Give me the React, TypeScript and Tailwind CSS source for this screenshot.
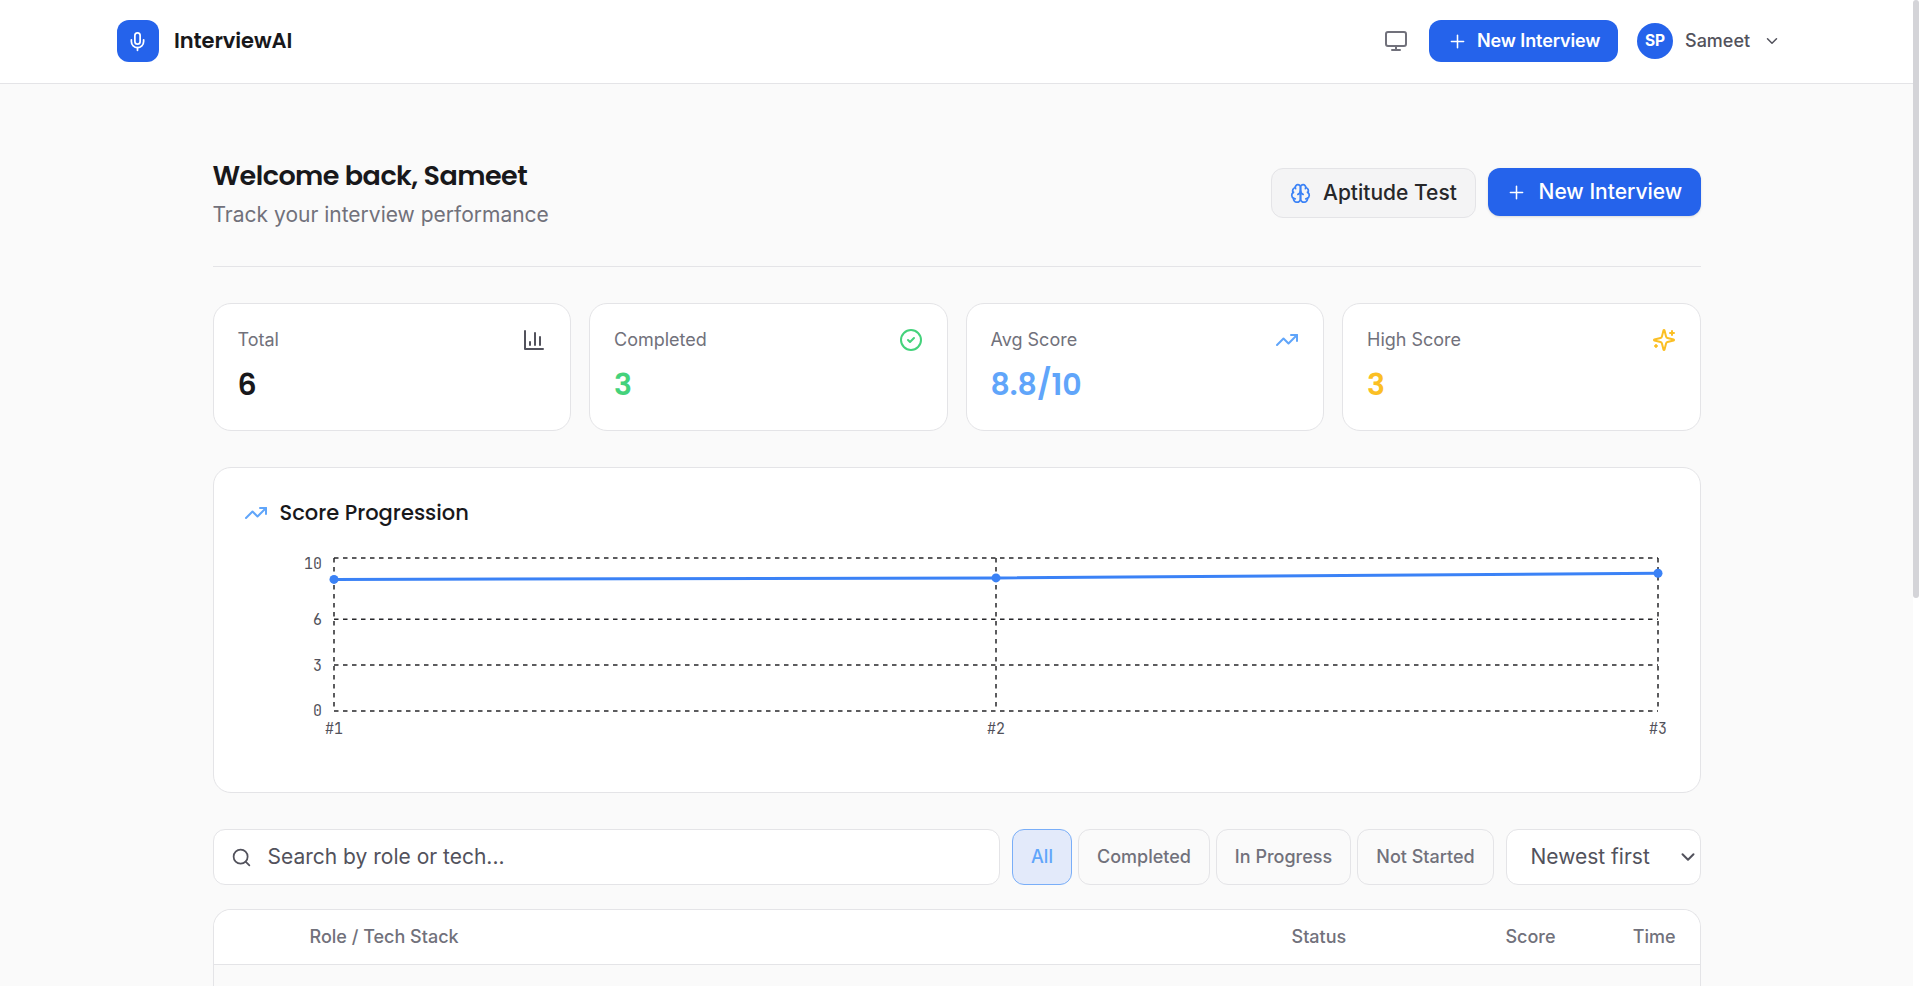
import React from 'react';
import { ChevronDown, CircleCheck, Mic, Monitor, Plus, Search, TrendingUp } from 'lucide-react';

const HEADING = "font-['Poppins','Inter',sans-serif]";

const scores = [8.6, 8.7, 9.0];

const filters = [
  { label: 'All', width: 'w-[60px]', active: true },
  { label: 'Completed', width: 'w-[132px]', active: false },
  { label: 'In Progress', width: 'w-[135px]', active: false },
  { label: 'Not Started', width: 'w-[137px]', active: false },
];

const App: React.FC = () => {
  return (
    <div className="flex h-[986px] w-[1919px] overflow-hidden bg-[#fafafa] font-['Inter',sans-serif] text-zinc-900">
      <div className="flex w-[1913px] shrink-0 flex-col">
        <Navbar />
        <main className="mx-auto flex w-[1488px] flex-col pt-[71px]">
          <WelcomeBar />

          {/* Stats */}
          <div className="mt-9 grid grid-cols-4 gap-[18px]">
            <StatCard label="Total" value="6" color="text-zinc-900" icon={<ColumnsIcon />} />
            <StatCard label="Completed" value="3" color="text-[#44d27b]" icon={<CircleCheck className="size-6 text-[#44d27b]" />} />
            <StatCard label="Avg Score" value="8.8/10" color="text-[#60a5fa]" icon={<TrendingUp className="size-6 text-[#60a5fa]" />} />
            <StatCard label="High Score" value="3" color="text-[#fbbf24]" icon={<SparklesIcon />} />
          </div>

          {/* Chart */}
          <section className="mt-9 h-[326px] rounded-[18px] border border-[#e4e4e7] bg-white px-[30px] pt-[30px]">
            <div className="flex h-[30px] items-center gap-3">
              <TrendingUp className="size-6 text-[#60a5fa]" />
              <h2 className={`${HEADING} text-[21px] font-medium`}>Score Progression</h2>
            </div>
            <ScoreChart />
          </section>

          <Toolbar />

          {/* Sessions table */}
          <section className="mt-6 h-[120px] rounded-t-[18px] border border-b-0 border-[#e4e4e7]">
            <div className="flex h-[55px] items-center rounded-t-[17px] border-b border-[#e4e4e7] bg-white pb-px pl-[96px] text-[18px] font-medium text-zinc-500">
              <span className="w-[982px]">Role / Tech Stack</span>
              <span className="w-[160px]">Status</span>
              <span className="w-[104px] text-right">Score</span>
              <span className="w-[120px] text-right">Time</span>
            </div>
          </section>
        </main>
      </div>

      {/* Scrollbar */}
      <div className="w-1.5 shrink-0 bg-white">
        <div className="h-[598px] rounded-[3px] bg-[#d4d4d8]" />
      </div>
    </div>
  );
};

const Navbar: React.FC = () => (
  <header className="flex h-[84px] shrink-0 items-center justify-between border-b border-[#e4e4e7] bg-white pr-[133px] pb-px pl-[117px]">
    <div className="flex items-center">
      <div className="flex size-[42px] items-center justify-center rounded-xl bg-[#2563eb] pr-px">
        <Mic className="size-[21px] text-white" />
      </div>
      <span className={`${HEADING} ml-[15px] text-[21px] font-semibold tracking-[-0.1px]`}>InterviewAI</span>
    </div>
    <div className="flex items-center">
      <Monitor className="size-6 text-zinc-500" />
      <button className="ml-[21px] flex h-[42px] w-[189px] items-center rounded-xl bg-[#2563eb] pl-[18px] text-[18px] font-semibold text-white">
        <Plus className="size-[21px]" strokeWidth={1.75} />
        <span className="ml-[9px] pb-[2px] tracking-[-0.1px]">New Interview</span>
      </button>
      <div className="ml-[19px] flex size-9 items-center justify-center rounded-full bg-[#2563eb] pb-px text-[15.5px] font-bold text-white">SP</div>
      <span className="ml-3 w-[67px] pb-[2px] text-[18px] font-medium text-zinc-600">Sameet</span>
      <ChevronDown className="ml-[11px] -mr-px size-[18px] text-zinc-600" />
    </div>
  </header>
);

const WelcomeBar: React.FC = () => (
  <div className="flex h-[112px] justify-between border-b border-[#e4e4e7]">
    <div>
      <h1 className={`${HEADING} mt-[3px] text-[27px] leading-[36px] font-semibold tracking-[-0.54px]`}>Welcome back, Sameet</h1>
      <p className="mt-[6px] text-[21px] leading-[30px] text-zinc-500">Track your interview performance</p>
    </div>
    <div className="mt-[13px] flex items-start gap-3">
      <button className="flex h-[50px] w-[205px] items-center rounded-xl border border-[#e4e4e7] bg-[#f4f4f5] pl-[18px] text-[21px] font-medium text-zinc-800">
        <BrainIcon />
        <span className="ml-[12.5px]">Aptitude Test</span>
      </button>
      <button className="flex h-12 w-[213px] items-center rounded-xl bg-[#2563eb] pl-[18px] text-[21px] font-medium text-white shadow-sm">
        <Plus className="size-[21px]" strokeWidth={1.75} />
        <span className="ml-3">New Interview</span>
      </button>
    </div>
  </div>
);

const StatCard: React.FC<{ label: string; value: string; color: string; icon: React.ReactNode }> = ({ label, value, color, icon }) => (
  <div className="h-[128px] rounded-[18px] border border-[#e4e4e7] bg-white px-6 pt-6">
    <div className="flex h-6 items-center justify-between">
      <span className="-mt-px text-[18px] text-zinc-500">{label}</span>
      {icon}
    </div>
    <div className={`${HEADING} ${color} mt-[15px] text-[30px] leading-[36px] font-semibold`}>{value}</div>
  </div>
);

const ColumnsIcon: React.FC = () => (
  <svg className="size-6 text-zinc-600" viewBox="0 0 24 24" fill="none" stroke="currentColor" strokeWidth="2" strokeLinecap="round" strokeLinejoin="round">
    <path d="M3 3v18h18M18 17V9M13 17V5M8 17v-3" />
  </svg>
);

const SparklesIcon: React.FC = () => (
  <svg className="size-6 text-[#fbbf24]" viewBox="0 0 24 24" fill="none" stroke="currentColor" strokeWidth="2" strokeLinecap="round" strokeLinejoin="round">
    <path d="M9.937 15.5A2 2 0 0 0 8.5 14.063l-6.135-1.582a.5.5 0 0 1 0-.962L8.5 9.936A2 2 0 0 0 9.937 8.5l1.582-6.135a.5.5 0 0 1 .963 0L14.063 8.5A2 2 0 0 0 15.5 9.937l6.135 1.581a.5.5 0 0 1 0 .964L15.5 14.063a2 2 0 0 0-1.437 1.437l-1.582 6.135a.5.5 0 0 1-.963 0z" />
    <path d="M20 3v4M22 5h-4M4 17v2M5 18H3" />
  </svg>
);

const BrainIcon: React.FC = () => (
  <svg className="size-[21px] text-[#3b82f6]" viewBox="0 0 24 24" fill="none" stroke="currentColor" strokeWidth="2" strokeLinecap="round" strokeLinejoin="round">
    <path d="M12 5a3 3 0 1 0-5.997.125 4 4 0 0 0-2.526 5.77 4 4 0 0 0 .556 6.588A4 4 0 1 0 12 18Z" />
    <path d="M12 5a3 3 0 1 1 5.997.125 4 4 0 0 1 2.526 5.77 4 4 0 0 1-.556 6.588A4 4 0 1 1 12 18Z" />
    <path d="M15 13a4.5 4.5 0 0 1-3-4 4.5 4.5 0 0 1-3 4" />
    <path d="M17.599 6.5a3 3 0 0 0 .399-1.375M6.003 5.125A3 3 0 0 0 6.401 6.5M3.477 10.896a4 4 0 0 1 .585-.396M19.938 10.5a4 4 0 0 1 .585.396M6 18a4 4 0 0 1-1.967-.516M19.967 17.484A4 4 0 0 1 18 18" />
  </svg>
);

const ScoreChart: React.FC = () => {
  const left = 90;
  const right = 1414;
  const bottom = 183;
  const x = (i: number) => left + (i * (right - left)) / 2;
  const y = (value: number) => bottom - value * 15.3;
  const points = scores.map((s, i) => ({ x: x(i), y: y(s) }));

  return (
    <svg className="block h-[240px] w-[1426px] overflow-visible" viewBox="0 0 1426 240">
      <g stroke="#27272a" strokeWidth="1.5" strokeDasharray="4.5 4.5">
        {[0, 3, 6, 10].map((v) => (
          <line key={v} x1={left} x2={right} y1={y(v)} y2={y(v)} />
        ))}
        {points.map((p) => (
          <line key={p.x} x1={p.x} x2={p.x} y1={y(10)} y2={bottom} />
        ))}
      </g>
      <polyline points={points.map((p) => `${p.x},${p.y}`).join(' ')} fill="none" stroke="#3b82f6" strokeWidth="3" />
      {points.map((p) => (
        <circle key={p.x} cx={p.x} cy={p.y} r="4.5" fill="#3b82f6" />
      ))}
      <g className="font-['JetBrains_Mono','Liberation_Mono',monospace] text-[15px]" fill="#52525b">
        <text x="78" y="41" textAnchor="end">10</text>
        <text x="78" y="97" textAnchor="end">6</text>
        <text x="78" y="142.5" textAnchor="end">3</text>
        <text x="78" y="188" textAnchor="end">0</text>
        {points.map((p, i) => (
          <text key={p.x} x={p.x} y="206" textAnchor="middle">#{i + 1}</text>
        ))}
      </g>
    </svg>
  );
};

const Toolbar: React.FC = () => (
  <div className="mt-9 flex h-14">
    <div className="flex w-[787px] items-center rounded-xl border border-[#e4e4e7] bg-white pl-[17px]">
      <Search className="size-[21px] text-zinc-600" />
      <span className="ml-4 text-[21px] text-zinc-600">Search by role or tech...</span>
    </div>
    <div className="ml-3 flex gap-[6px]">
      {filters.map((f) => (
        <button
          key={f.label}
          className={`${f.width} rounded-xl border pb-[2px] pl-px text-[18px] font-medium ${f.active ? 'border-[#79aef8] bg-[#e3eafa] text-[#60a5fa]' : 'border-[#e4e4e7] text-zinc-500'}`}
        >
          {f.label}
        </button>
      ))}
    </div>
    <div className="ml-3 flex w-[195px] items-center justify-between rounded-xl border border-[#e4e4e7] bg-white pr-px pl-6 text-[21px] text-zinc-600">
      <span>Newest first</span>
      <ChevronDown className="size-[22px]" strokeWidth={2.2} />
    </div>
  </div>
);

export default App;
